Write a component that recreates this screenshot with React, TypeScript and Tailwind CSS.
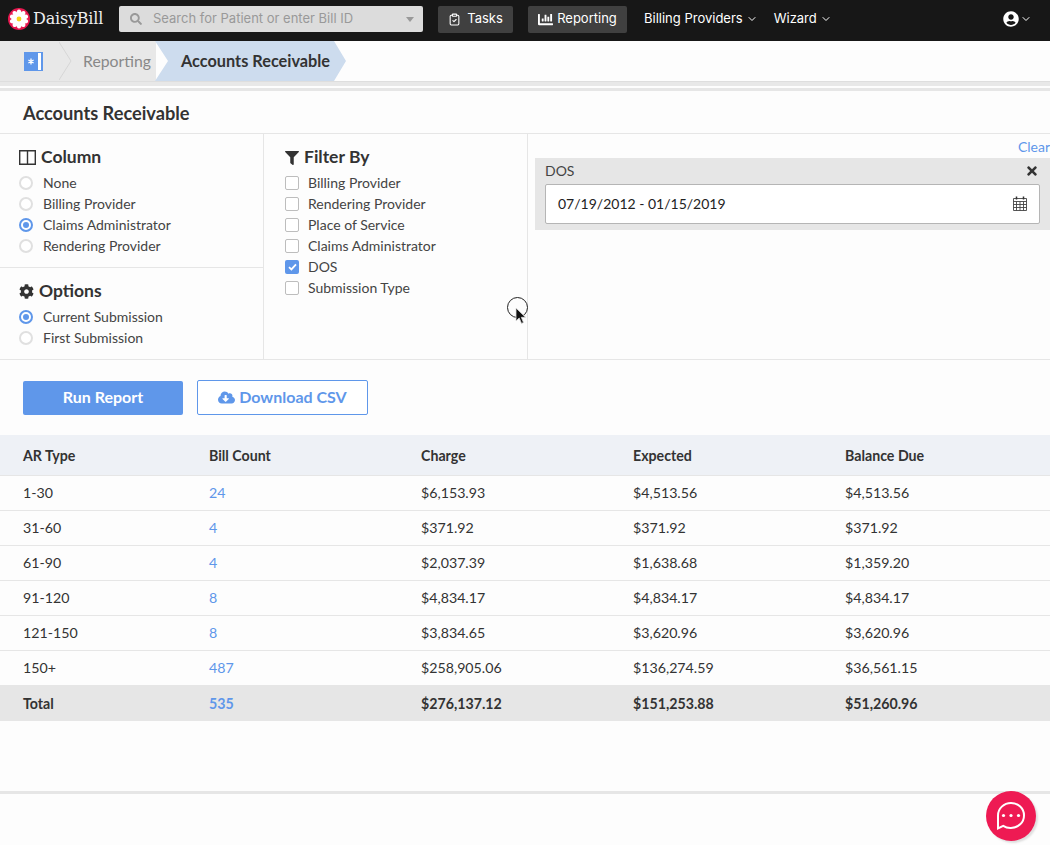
import { ChevronDown, ClipboardCheck } from "lucide-react";
import { FaChartBar, FaCloudDownloadAlt, FaCog, FaFilter, FaSearch, FaTimes, FaUserCircle } from "react-icons/fa";

const columnOptions = [
  { label: "None", on: false },
  { label: "Billing Provider", on: false },
  { label: "Claims Administrator", on: true },
  { label: "Rendering Provider", on: false },
];

const submissionOptions = [
  { label: "Current Submission", on: true },
  { label: "First Submission", on: false },
];

const filters = [
  { label: "Billing Provider", on: false },
  { label: "Rendering Provider", on: false },
  { label: "Place of Service", on: false },
  { label: "Claims Administrator", on: false },
  { label: "DOS", on: true },
  { label: "Submission Type", on: false },
];

const rows = [
  ["1-30", "24", "$6,153.93", "$4,513.56", "$4,513.56"],
  ["31-60", "4", "$371.92", "$371.92", "$371.92"],
  ["61-90", "4", "$2,037.39", "$1,638.68", "$1,359.20"],
  ["91-120", "8", "$4,834.17", "$4,834.17", "$4,834.17"],
  ["121-150", "8", "$3,834.65", "$3,620.96", "$3,620.96"],
  ["150+", "487", "$258,905.06", "$136,274.59", "$36,561.15"],
];

function Logo() {
  const petals = [0, 36, 72, 108, 144, 180, 216, 252, 288, 324];
  return (
    <svg width="22" height="22" viewBox="0 0 22 22" className="shrink-0">
      <circle cx="11" cy="11" r="11" fill="#e8174f" />
      {petals.map((a) => (
        <ellipse key={a} cx="11" cy="5.4" rx="2.4" ry="3.9" fill="#fff" transform={`rotate(${a} 11 11)`} />
      ))}
      <circle cx="11" cy="11" r="2.4" fill="#f7d417" />
    </svg>
  );
}

function Radio({ label, on }: { label: string; on: boolean }) {
  return (
    <div className="flex h-[21px] items-center">
      {on ? (
        <span className="flex h-[14px] w-[14px] items-center justify-center rounded-full border-2 border-[#5f97ea] bg-white">
          <span className="h-[6px] w-[6px] rounded-full bg-[#5f97ea]" />
        </span>
      ) : (
        <span className="h-[14px] w-[14px] rounded-full border-2 border-[#e0e0e0] bg-white" />
      )}
      <span className="ml-[10px] text-[14px] text-[#444]">{label}</span>
    </div>
  );
}

function Checkbox({ label, on }: { label: string; on: boolean }) {
  return (
    <div className="flex h-[21px] items-center">
      {on ? (
        <span className="flex h-[14px] w-[14px] items-center justify-center rounded-[2px] bg-[#5f97ea]">
          <svg width="9" height="8" viewBox="0 0 9 8">
            <path d="M1 4.2 3.4 6.4 8 1.4" fill="none" stroke="#fff" strokeWidth="1.8" />
          </svg>
        </span>
      ) : (
        <span className="h-[14px] w-[14px] rounded-[2px] border border-[#bdbdbd] bg-white" />
      )}
      <span className="ml-[9px] text-[14px] text-[#444]">{label}</span>
    </div>
  );
}

function PanelTitle({ icon, children }: { icon: React.ReactNode; children: React.ReactNode }) {
  return (
    <div className="flex h-[21px] items-center gap-[5px] text-[17.5px] font-bold text-[#333]">
      {icon}
      <span>{children}</span>
    </div>
  );
}

function Row({ cells, total }: { cells: string[]; total?: boolean }) {
  return (
    <div
      className={
        total
          ? "grid h-[35px] grid-cols-[209px_212px_212px_212px_1fr] items-center bg-[#e6e6e6] text-[14.2px] font-bold text-[#333]"
          : "grid h-[35px] grid-cols-[209px_212px_212px_212px_1fr] items-center border-b border-[#e6e6e6] text-[14.2px] text-[#333]"
      }
    >
      <span className="pl-[23px]">{cells[0]}</span>
      <span className="text-[#5f97ea]">{cells[1]}</span>
      <span>{cells[2]}</span>
      <span>{cells[3]}</span>
      <span>{cells[4]}</span>
    </div>
  );
}

export default function App() {
  return (
    <div className="relative h-[845px] overflow-hidden bg-[#fdfdfd] font-['Lato','Liberation_Sans',sans-serif]">
      {/* top nav */}
      <div className="flex h-[41px] items-center bg-[#171717] pb-[3px] pl-[8px] pr-[18px] font-['Inter',sans-serif] text-[13px] text-white">
        <Logo />
        <span className="ml-[3px] w-[86px] font-['DejaVu_Serif',serif] text-[16px] tracking-[-0.2px] text-[#eee]">DaisyBill</span>
        <div className="flex h-[26px] w-[304px] items-center rounded-[2px] bg-[#dcdcdc] pl-[11px] pr-[9px] text-[#999]">
          <FaSearch className="text-[12px]" />
          <span className="ml-[11px] flex-1">Search for Patient or enter Bill ID</span>
          <span className="h-0 w-0 border-x-[4px] border-t-[5px] border-x-transparent border-t-[#999]" />
        </div>
        <div className="ml-[15px] flex h-[27px] w-[75px] items-center justify-center gap-[6px] rounded-[2px] bg-[#404040]">
          <ClipboardCheck size={13} />
          <span>Tasks</span>
        </div>
        <div className="ml-[15px] flex h-[27px] w-[99px] items-center justify-center gap-[4px] rounded-[2px] bg-[#404040]">
          <FaChartBar className="text-[15px]" />
          <span>Reporting</span>
        </div>
        <div className="ml-[17px] flex items-center gap-[3px]">
          <span>Billing Providers</span>
          <ChevronDown size={12} />
        </div>
        <div className="ml-[16px] flex items-center gap-[3px]">
          <span>Wizard</span>
          <ChevronDown size={12} />
        </div>
        <div className="ml-auto flex items-center gap-[1px]">
          <FaUserCircle className="text-[16px]" />
          <ChevronDown size={12} />
        </div>
      </div>

      {/* breadcrumb */}
      <div className="flex h-[40px]">
        <div className="relative flex h-[40px] w-[156px] items-center bg-[#e8e8e8]">
          <svg width="19" height="19" viewBox="0 0 19 19" className="ml-[24px] shrink-0">
            <rect width="19" height="19" fill="#5f97ea" />
            <rect x="14" y="1" width="3" height="17" fill="#fff" />
            <path d="M7 6.5v6M4.4 8l5.2 3M9.6 8l-5.2 3" stroke="#fff" strokeWidth="1.3" />
          </svg>
          <svg width="13" height="38" viewBox="0 0 13 38" className="ml-[16px] shrink-0">
            <path d="M0 0 12 19 0 38" fill="none" stroke="#d6d6d6" />
          </svg>
          <span className="ml-[11px] text-[15.8px] text-[#888]">Reporting</span>
        </div>
        <div className="-ml-[1px] flex h-[40px] w-[191px] items-center bg-[#cddcee] pl-[26px] pt-[1px] text-[16.3px] font-bold text-[#333] [clip-path:polygon(0_0,179px_0,100%_50%,179px_100%,0_100%,13px_50%)]">
          Accounts Receivable
        </div>
      </div>
      <div className="h-[5px] border-t border-[#dedede] bg-[#e8e8e8]" />

      <div className="mt-[2px] h-[3px] bg-[#e6e6e6]" />

      <div className="flex h-[43px] items-center border-b border-[#e6e6e6] pl-[23px] pt-[3px] text-[18.2px] font-bold text-[#333]">
        Accounts Receivable
      </div>

      {/* report settings */}
      <div className="flex h-[226px] border-b border-[#e6e6e6]">
        <div className="flex w-[264px] flex-col border-r border-[#e6e6e6]">
          <div className="h-[134px] border-b border-[#e6e6e6] pl-[19px] pt-[13px]">
            <PanelTitle
              icon={
                <svg width="17" height="15" viewBox="0 0 17 15">
                  <path d="M.7.7h15.6v13.6H.7zM8.5.7v13.6" fill="none" stroke="#333" strokeWidth="1.4" />
                </svg>
              }
            >
              Column
            </PanelTitle>
            <div className="mt-[4px]">
              {columnOptions.map((o) => (
                <Radio key={o.label} label={o.label} on={o.on} />
              ))}
            </div>
          </div>
          <div className="pl-[19px] pt-[13px]">
            <PanelTitle icon={<FaCog className="text-[15px]" />}>Options</PanelTitle>
            <div className="mt-[4px]">
              {submissionOptions.map((o) => (
                <Radio key={o.label} label={o.label} on={o.on} />
              ))}
            </div>
          </div>
        </div>
        <div className="w-[264px] border-r border-[#e6e6e6] pl-[21px] pt-[13px]">
          <PanelTitle icon={<FaFilter className="text-[14px]" />}>Filter By</PanelTitle>
          <div className="mt-[4px]">
            {filters.map((o) => (
              <Checkbox key={o.label} label={o.label} on={o.on} />
            ))}
          </div>
        </div>
        <div className="min-w-0 flex-1 pl-[7px]">
          <div className="mt-[2px] h-[22px] text-right text-[14px] text-[#5f97ea]">Clear</div>
          <div className="h-[72px] bg-[#e6e6e6] px-[10px]">
            <div className="flex h-[26px] items-center justify-between pb-[1px] pr-[1px] text-[14px] text-[#444]">
              <span>DOS</span>
              <FaTimes className="text-[14px] text-[#333]" />
            </div>
            <div className="flex h-[40px] items-center justify-between rounded-[2px] border border-[#b5b5b5] bg-white pb-[1px] pl-[12px] pr-[12px] text-[14px] text-[#222]">
              <span>07/19/2012 - 01/15/2019</span>
              <svg width="14" height="15" viewBox="0 0 14 15">
                <path d="M.5 2.5h13v12H.5zM.5 5.5h13M.5 8.5h13M.5 11.5h13M3.5 5.5v9M7 5.5v9M10.5 5.5v9" fill="none" stroke="#444" strokeWidth="0.9" />
                <path d="M3.5 .5v3M10.5 .5v3" fill="none" stroke="#333" strokeWidth="1.5" />
              </svg>
            </div>
          </div>
        </div>
      </div>

      {/* actions */}
      <div className="flex h-[75px] items-center pl-[23px]">
        <button className="h-[34px] w-[160px] rounded-[2px] bg-[#5f97ea] pb-[1px] text-[16px] font-bold text-white">Run Report</button>
        <button className="ml-[14px] flex h-[35px] w-[171px] items-center justify-center gap-[4px] rounded-[2px] border border-[#5f97ea] bg-white pb-[1px] text-[16px] font-bold text-[#5f97ea]">
          <FaCloudDownloadAlt className="text-[17px]" />
          Download CSV
        </button>
      </div>

      {/* table */}
      <div className="grid h-[41px] grid-cols-[209px_212px_212px_212px_1fr] items-center border-b border-[#e6e6e6] bg-[#eef1f6] pt-[1px] text-[14.2px] font-bold text-[#333]">
        <span className="pl-[23px]">AR Type</span>
        <span>Bill Count</span>
        <span>Charge</span>
        <span>Expected</span>
        <span>Balance Due</span>
      </div>
      {rows.map((r) => (
        <Row key={r[0]} cells={r} />
      ))}
      <Row total cells={["Total", "535", "$276,137.12", "$151,253.88", "$51,260.96"]} />

      <div className="mt-[70px] h-[3px] bg-[#e6e6e6]" />

      {/* chat launcher */}
      <div className="absolute left-[986px] top-[791px] flex h-[50px] w-[50px] items-center justify-center rounded-full bg-[#ee1a53] shadow-[2px_2px_2px_rgba(0,0,0,0.12)]">
        <svg width="32" height="32" viewBox="0 0 32 32">
          <path d="M16 3C8.8 3 3 8.6 3 15.4V28.5l5.2-2.6A13 13 0 0 0 16 28c7.2 0 13-5.6 13-12.6S23.2 3 16 3Z" fill="none" stroke="#fff" strokeWidth="2" />
          <circle cx="8.5" cy="15.5" r="1.6" fill="#fff" />
          <circle cx="16" cy="15.5" r="1.6" fill="#fff" />
          <circle cx="23.5" cy="15.5" r="1.6" fill="#fff" />
        </svg>
      </div>

      {/* mouse cursor from the recording */}
      <div className="absolute left-[507px] top-[297px] h-[21px] w-[21px] rounded-full border border-[#222]" />
      <svg width="12" height="18" viewBox="0 0 12 18" className="absolute left-[515px] top-[307px]">
        <path d="M1 1v13l3.2-3 2.3 5.4 2-.9-2.2-5.2H10.5Z" fill="#111" stroke="#ddd" strokeWidth="0.8" />
      </svg>
    </div>
  );
}
